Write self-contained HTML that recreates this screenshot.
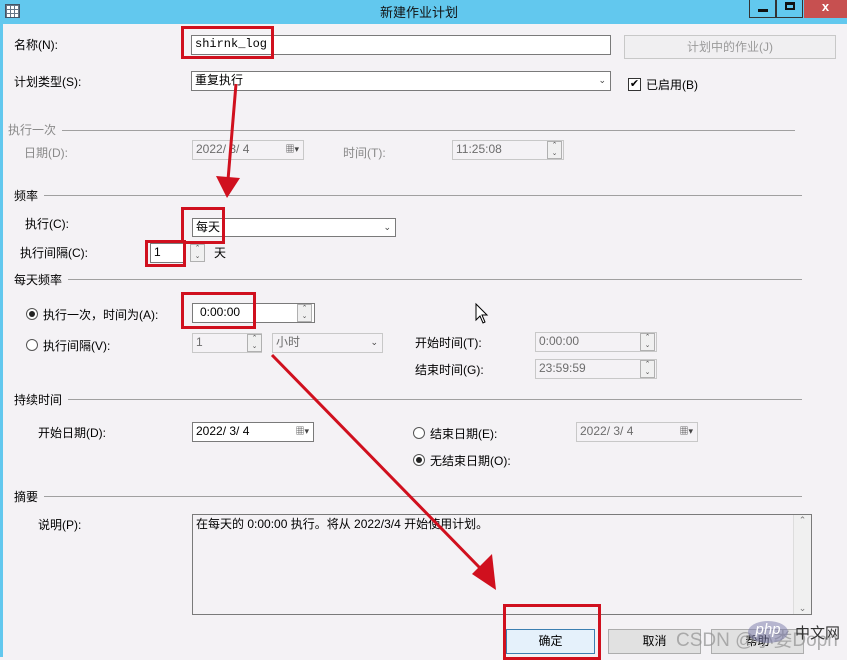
<!DOCTYPE html>
<html><head><meta charset="utf-8"><style>
*{box-sizing:border-box;margin:0;padding:0}
body{width:847px;height:657px;overflow:hidden;background:#f4f2f5;font-family:"Liberation Sans","Noto Sans CJK SC",sans-serif;font-size:12px;color:#000;position:relative}
.a{position:absolute;white-space:nowrap}
.tb{left:0;top:0;width:847px;height:24px;background:#62c8ee}
.lb{left:0;top:24px;width:3px;height:633px;background:#62c8ee}
.in{position:absolute;background:#fff;border:1px solid #7a7a7a;padding:0 3px;line-height:17px}
.dis{background:#f4f2f5;border-color:#c8c8c8;color:#6d6d6d}
.red{position:absolute;border:3px solid #d0101e}
.g{color:#8a8a8a}
.ln{position:absolute;height:1px;background:#a0a0a0}
.btn{position:absolute;background:#e1e1e1;border:1px solid #adadad;text-align:center;line-height:22px}
.sp{position:absolute;width:15px;border:1px solid #b0b0b0;background:#f0f0f0;font-size:7px;text-align:center;line-height:8px;color:#555}
.rad{position:absolute;width:12px;height:12px;border:1px solid #555;border-radius:50%;background:#fff}
.dd{position:absolute;right:4px;top:0;font-size:9px;color:#444}
</style></head><body>
<div class="a tb"></div><div class="a lb"></div>
<div class="a" style="left:5px;top:4px;width:15px;height:14px;background:#fff;border:1px solid #456;background-image:linear-gradient(#678 1px,transparent 1px),linear-gradient(90deg,#678 1px,transparent 1px);background-size:4px 4px"></div>
<div class="a" style="left:380px;top:2px;font-size:13px;color:#111">新建作业计划</div>
<div class="a" style="left:749px;top:0;width:27px;height:18px;border:1px solid #333;border-top:0"><div style="position:absolute;left:8px;top:9px;width:10px;height:3px;background:#111"></div></div>
<div class="a" style="left:776px;top:0;width:27px;height:18px;border:1px solid #333;border-top:0"><div style="position:absolute;left:8px;top:2px;width:10px;height:8px;border:2px solid #111;border-top-width:3px"></div></div>
<div class="a" style="left:804px;top:0;width:43px;height:18px;background:#c75050;color:#fff;font-weight:bold;text-align:center;font-size:13px;line-height:14px">x</div>

<div class="a" style="left:14px;top:36px">名称(N):</div>
<div class="in" style="left:191px;top:35px;width:420px;height:20px;font-family:'Liberation Mono',monospace">shirnk_log</div>
<div class="red" style="left:181px;top:26px;width:93px;height:33px"></div>
<div class="btn" style="left:624px;top:35px;width:212px;height:24px;color:#9a9a9a;background:#f0eff1;border-color:#c8c8c8">计划中的作业(J)</div>
<div class="a" style="left:14px;top:73px">计划类型(S):</div>
<div class="in" style="left:191px;top:71px;width:420px;height:20px">重复执行<span class="dd">⌄</span></div>
<div class="a" style="left:628px;top:78px;width:13px;height:13px;border:1px solid #333;background:#fff;font-size:11px;line-height:11px;text-align:center">✔</div>
<div class="a" style="left:646px;top:76px">已启用(B)</div>

<div class="a g" style="left:8px;top:121px">执行一次</div><div class="ln" style="left:62px;top:130px;width:733px"></div>
<div class="a g" style="left:24px;top:144px">日期(D):</div>
<div class="in dis" style="left:192px;top:140px;width:112px;height:20px">2022/ 3/ 4<span class="dd">▦▾</span></div>
<div class="a g" style="left:343px;top:144px">时间(T):</div>
<div class="in dis" style="left:452px;top:140px;width:112px;height:20px">11:25:08</div>
<div class="sp" style="left:547px;top:141px;height:18px">⌃<br>⌄</div>

<div class="a" style="left:14px;top:187px">频率</div><div class="ln" style="left:44px;top:195px;width:758px"></div>
<div class="a" style="left:25px;top:215px">执行(C):</div>
<div class="in" style="left:192px;top:218px;width:204px;height:19px">每天<span class="dd">⌄</span></div>
<div class="red" style="left:181px;top:207px;width:44px;height:37px"></div>
<div class="a" style="left:20px;top:244px">执行间隔(C):</div>
<div class="in" style="left:150px;top:243px;width:34px;height:20px">1</div>
<div class="red" style="left:145px;top:240px;width:41px;height:27px"></div>
<div class="sp" style="left:190px;top:244px;height:18px">⌃<br>⌄</div>
<div class="a" style="left:214px;top:244px">天</div>

<div class="a" style="left:14px;top:271px">每天频率</div><div class="ln" style="left:68px;top:279px;width:734px"></div>
<div class="rad" style="left:26px;top:308px"><div style="margin:2px;width:6px;height:6px;border-radius:50%;background:#222"></div></div>
<div class="a" style="left:43px;top:306px">执行一次，时间为(A):</div>
<div class="in" style="left:192px;top:303px;width:123px;height:20px;padding-left:7px">0:00:00</div>
<div class="sp" style="left:297px;top:304px;height:18px">⌃<br>⌄</div>
<div class="red" style="left:181px;top:292px;width:75px;height:37px"></div>
<div class="rad" style="left:26px;top:339px"></div>
<div class="a" style="left:43px;top:337px">执行间隔(V):</div>
<div class="in dis" style="left:192px;top:333px;width:70px;height:20px">1</div>
<div class="sp" style="left:247px;top:334px;height:18px">⌃<br>⌄</div>
<div class="in dis" style="left:272px;top:333px;width:111px;height:20px">小时<span class="dd">⌄</span></div>
<div class="a" style="left:415px;top:334px">开始时间(T):</div>
<div class="in dis" style="left:535px;top:332px;width:122px;height:20px">0:00:00</div>
<div class="sp" style="left:640px;top:333px;height:18px">⌃<br>⌄</div>
<div class="a" style="left:415px;top:361px">结束时间(G):</div>
<div class="in dis" style="left:535px;top:359px;width:122px;height:20px">23:59:59</div>
<div class="sp" style="left:640px;top:360px;height:18px">⌃<br>⌄</div>

<div class="a" style="left:14px;top:391px">持续时间</div><div class="ln" style="left:68px;top:399px;width:734px"></div>
<div class="a" style="left:38px;top:424px">开始日期(D):</div>
<div class="in" style="left:192px;top:422px;width:122px;height:20px">2022/ 3/ 4<span class="dd">▦▾</span></div>
<div class="rad" style="left:413px;top:427px"></div>
<div class="a" style="left:430px;top:425px">结束日期(E):</div>
<div class="in dis" style="left:576px;top:422px;width:122px;height:20px">2022/ 3/ 4<span class="dd">▦▾</span></div>
<div class="rad" style="left:413px;top:454px"><div style="margin:2px;width:6px;height:6px;border-radius:50%;background:#222"></div></div>
<div class="a" style="left:430px;top:452px">无结束日期(O):</div>

<div class="a" style="left:14px;top:488px">摘要</div><div class="ln" style="left:44px;top:496px;width:758px"></div>
<div class="a" style="left:38px;top:516px">说明(P):</div>
<div class="in" style="left:192px;top:514px;width:620px;height:101px;background:#f4f2f5;line-height:16px;padding-top:1px">在每天的 0:00:00 执行。将从 2022/3/4 开始使用计划。</div>
<div class="a" style="left:793px;top:515px;width:18px;height:99px;background:#f0f0f0;border-left:1px solid #ddd;font-size:9px;color:#777;text-align:center">⌃<div style="position:absolute;bottom:0;width:17px">⌄</div></div>

<div class="btn" style="left:506px;top:629px;width:89px;height:25px;border-color:#3c7fb1;background:#e5f1fb">确定</div>
<div class="btn" style="left:608px;top:629px;width:93px;height:25px">取消</div>
<div class="btn" style="left:711px;top:629px;width:93px;height:25px">帮助</div>
<div class="red" style="left:503px;top:604px;width:98px;height:56px"></div>
<div class="a" style="left:676px;top:625px;font-size:19px;color:rgba(150,150,150,.75)">CSDN @小娄Doph</div>
<div class="a" style="left:748px;top:621px;width:40px;height:22px;border-radius:50%;background:rgba(120,120,170,.5);color:#fff;font-size:15px;text-align:center;font-style:italic">php</div>
<div class="a" style="left:795px;top:622px;font-size:15px;color:#333">中文网</div>

<svg class="a" style="left:0;top:0" width="847" height="657">
<g stroke="#d0101e" stroke-width="3" fill="#d0101e">
<line x1="236" y1="84" x2="228" y2="180"/>
<polygon points="216,176 240,178 227,198" stroke="none"/>
<line x1="272" y1="355" x2="480" y2="568"/>
<polygon points="472,574 492,554 496,590" stroke="none"/>
</g>
<path d="M476 304 L476 320 L480 316 L483 323 L485 322 L482 315 L487 315 Z" fill="#fff" stroke="#000" stroke-width="1"/>
</svg>
</body></html>
